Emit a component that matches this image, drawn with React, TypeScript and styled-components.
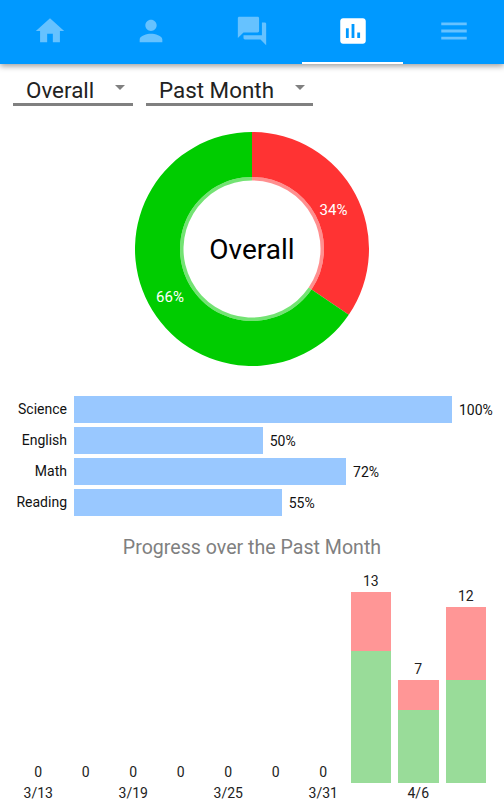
import React from 'react'
import styled, { createGlobalStyle } from 'styled-components'
import { MdHome, MdPerson, MdForum, MdAssessment, MdMenu } from 'react-icons/md'

const GlobalStyle = createGlobalStyle`
html, body {
  margin: 0;
  padding: 0;
  background: #FFFFFF;
  font-family: Roboto, "Liberation Sans", sans-serif;
  overflow: hidden;
}
`

const Page = styled.div`
width: 504px;
height: 800px;
overflow: hidden;
`

const Header = styled.header`
display: flex;
height: 64px;
background: #0099FF;
box-shadow: 0 2px 6px rgba(0, 0, 0, 0.4);
`

const Tab = styled.div<{ $active?: boolean }>`
flex: 1;
display: flex;
align-items: center;
justify-content: center;
box-sizing: border-box;
color: ${props => props.$active ? '#FFFFFF' : 'rgba(255, 255, 255, 0.4)'};
border-bottom: 2px solid ${props => props.$active ? '#FFFFFF' : 'transparent'};
`

const Filters = styled.div`
display: flex;
gap: 13px;
padding: 9px 13px 0;
`

const Dropdown = styled.div<{ $width: number }>`
display: flex;
justify-content: space-between;
box-sizing: border-box;
width: ${props => props.$width}px;
height: 33px;
padding: 3px 8.5px 0 13px;
border-bottom: 3px solid #808080;
font-size: 22.4px;
line-height: 28px;
color: #222222;
`

const Arrow = styled.span`
width: 0;
height: 0;
margin-top: 9px;
border-left: 5.5px solid transparent;
border-right: 5.5px solid transparent;
border-top: 5.5px solid #808080;
`

const DonutBox = styled.div`
position: relative;
width: 234px;
height: 234px;
margin: 26px auto 0;
`

const DonutSvg = styled.svg`
display: block;
`

const DonutTitle = styled.div`
position: absolute;
inset: 0;
display: flex;
align-items: center;
justify-content: center;
font-size: 28px;
color: #000000;
`

const DonutValue = styled.text`
font-family: Roboto, sans-serif;
font-size: 15px;
fill: #FFFFFF;
text-anchor: middle;
`

const BarList = styled.div`
display: flex;
flex-direction: column;
gap: 4px;
margin-top: 30px;
`

const BarRow = styled.div`
display: flex;
align-items: center;
height: 27px;
font-size: 14px;
color: #111111;
`

const BarLabel = styled.span`
width: 67px;
margin-right: 6.5px;
padding-bottom: 2px;
text-align: right;
`

const Bar = styled.div<{ $width: number }>`
width: ${props => props.$width}px;
height: 27px;
margin-right: 7px;
background: #99C8FF;
`

const ChartTitle = styled.h3`
margin: 21px 0 0;
font-size: 19.6px;
font-weight: 400;
line-height: 22px;
text-align: center;
color: #808080;
`

const Columns = styled.div`
display: flex;
align-items: flex-end;
height: 241px;
padding-left: 14.5px;
`

const Column = styled.div`
display: flex;
flex-direction: column;
align-items: center;
flex: 0 0 47.5px;
font-size: 14px;
line-height: 17px;
color: #222222;
`

const Stack = styled.div`
display: flex;
flex-direction: column;
width: 40.5px;
margin-top: 2px;
`

const Segment = styled.div<{ $color: string; $height: number }>`
height: ${props => props.$height}px;
background: ${props => props.$color};
`

const DateLabel = styled.div`
box-sizing: border-box;
height: 17px;
padding-top: 4px;
line-height: 13px;
white-space: nowrap;
`

const subjects = [
  { name: 'Science', value: 100 },
  { name: 'English', value: 50 },
  { name: 'Math', value: 72 },
  { name: 'Reading', value: 55 },
]

const progress = [
  { good: 0, bad: 0, date: '3/13' },
  { good: 0, bad: 0, date: '' },
  { good: 0, bad: 0, date: '3/19' },
  { good: 0, bad: 0, date: '' },
  { good: 0, bad: 0, date: '3/25' },
  { good: 0, bad: 0, date: '' },
  { good: 0, bad: 0, date: '3/31' },
  { good: 9, bad: 4, date: '' },
  { good: 5, bad: 2, date: '4/6' },
  { good: 7, bad: 5, date: '' },
]

const UNIT = 14.7
const BAR_MAX = 378.5
const RED_SHARE = 0.345

// annular slice from angle a to b, clockwise from 12 o'clock, in fractions of a turn
const slice = (a: number, b: number, outer: number, inner: number) => {
  const pt = (t: number, r: number) => {
    const ang = t * 2 * Math.PI
    return `${(117 + r * Math.sin(ang)).toFixed(2)} ${(117 - r * Math.cos(ang)).toFixed(2)}`
  }
  const large = b - a > 0.5 ? 1 : 0
  return `M${pt(a, outer)} A${outer} ${outer} 0 ${large} 1 ${pt(b, outer)} L${pt(b, inner)} A${inner} ${inner} 0 ${large} 0 ${pt(a, inner)} Z`
}

const Donut = () => (
  <DonutBox>
    <DonutSvg width="234" height="234" viewBox="0 0 234 234">
      <path d={slice(0, RED_SHARE, 117, 72)} fill="#FF3333" />
      <path d={slice(RED_SHARE, 1, 117, 72)} fill="#00CC00" />
      <path d={slice(0, RED_SHARE, 72, 68.5)} fill="#FF3333" opacity="0.55" />
      <path d={slice(RED_SHARE, 1, 72, 68.5)} fill="#00CC00" opacity="0.55" />
      <DonutValue x="198.5" y="83">34%</DonutValue>
      <DonutValue x="35" y="170">66%</DonutValue>
    </DonutSvg>
    <DonutTitle>Overall</DonutTitle>
  </DonutBox>
)

const App = () => {
  return (
    <Page>
      <GlobalStyle />
      <Header>
        <Tab><MdHome size={34} /></Tab>
        <Tab><MdPerson size={34} /></Tab>
        <Tab><MdForum size={34} /></Tab>
        <Tab $active><MdAssessment size={34} /></Tab>
        <Tab><MdMenu size={34} /></Tab>
      </Header>
      <Filters>
        <Dropdown $width={120}>Overall<Arrow /></Dropdown>
        <Dropdown $width={167}>Past Month<Arrow /></Dropdown>
      </Filters>
      <Donut />
      <BarList>
        {subjects.map(s => (
          <BarRow key={s.name}>
            <BarLabel>{s.name}</BarLabel>
            <Bar $width={BAR_MAX * s.value / 100} />
            {s.value}%
          </BarRow>
        ))}
      </BarList>
      <ChartTitle>Progress over the Past Month</ChartTitle>
      <Columns>
        {progress.map((p, i) => (
          <Column key={i}>
            {p.good + p.bad}
            <Stack>
              <Segment $color="#FF9696" $height={p.bad * UNIT} />
              <Segment $color="#99DC99" $height={p.good * UNIT} />
            </Stack>
            <DateLabel>{p.date}</DateLabel>
          </Column>
        ))}
      </Columns>
    </Page>
  )
}

export default App
